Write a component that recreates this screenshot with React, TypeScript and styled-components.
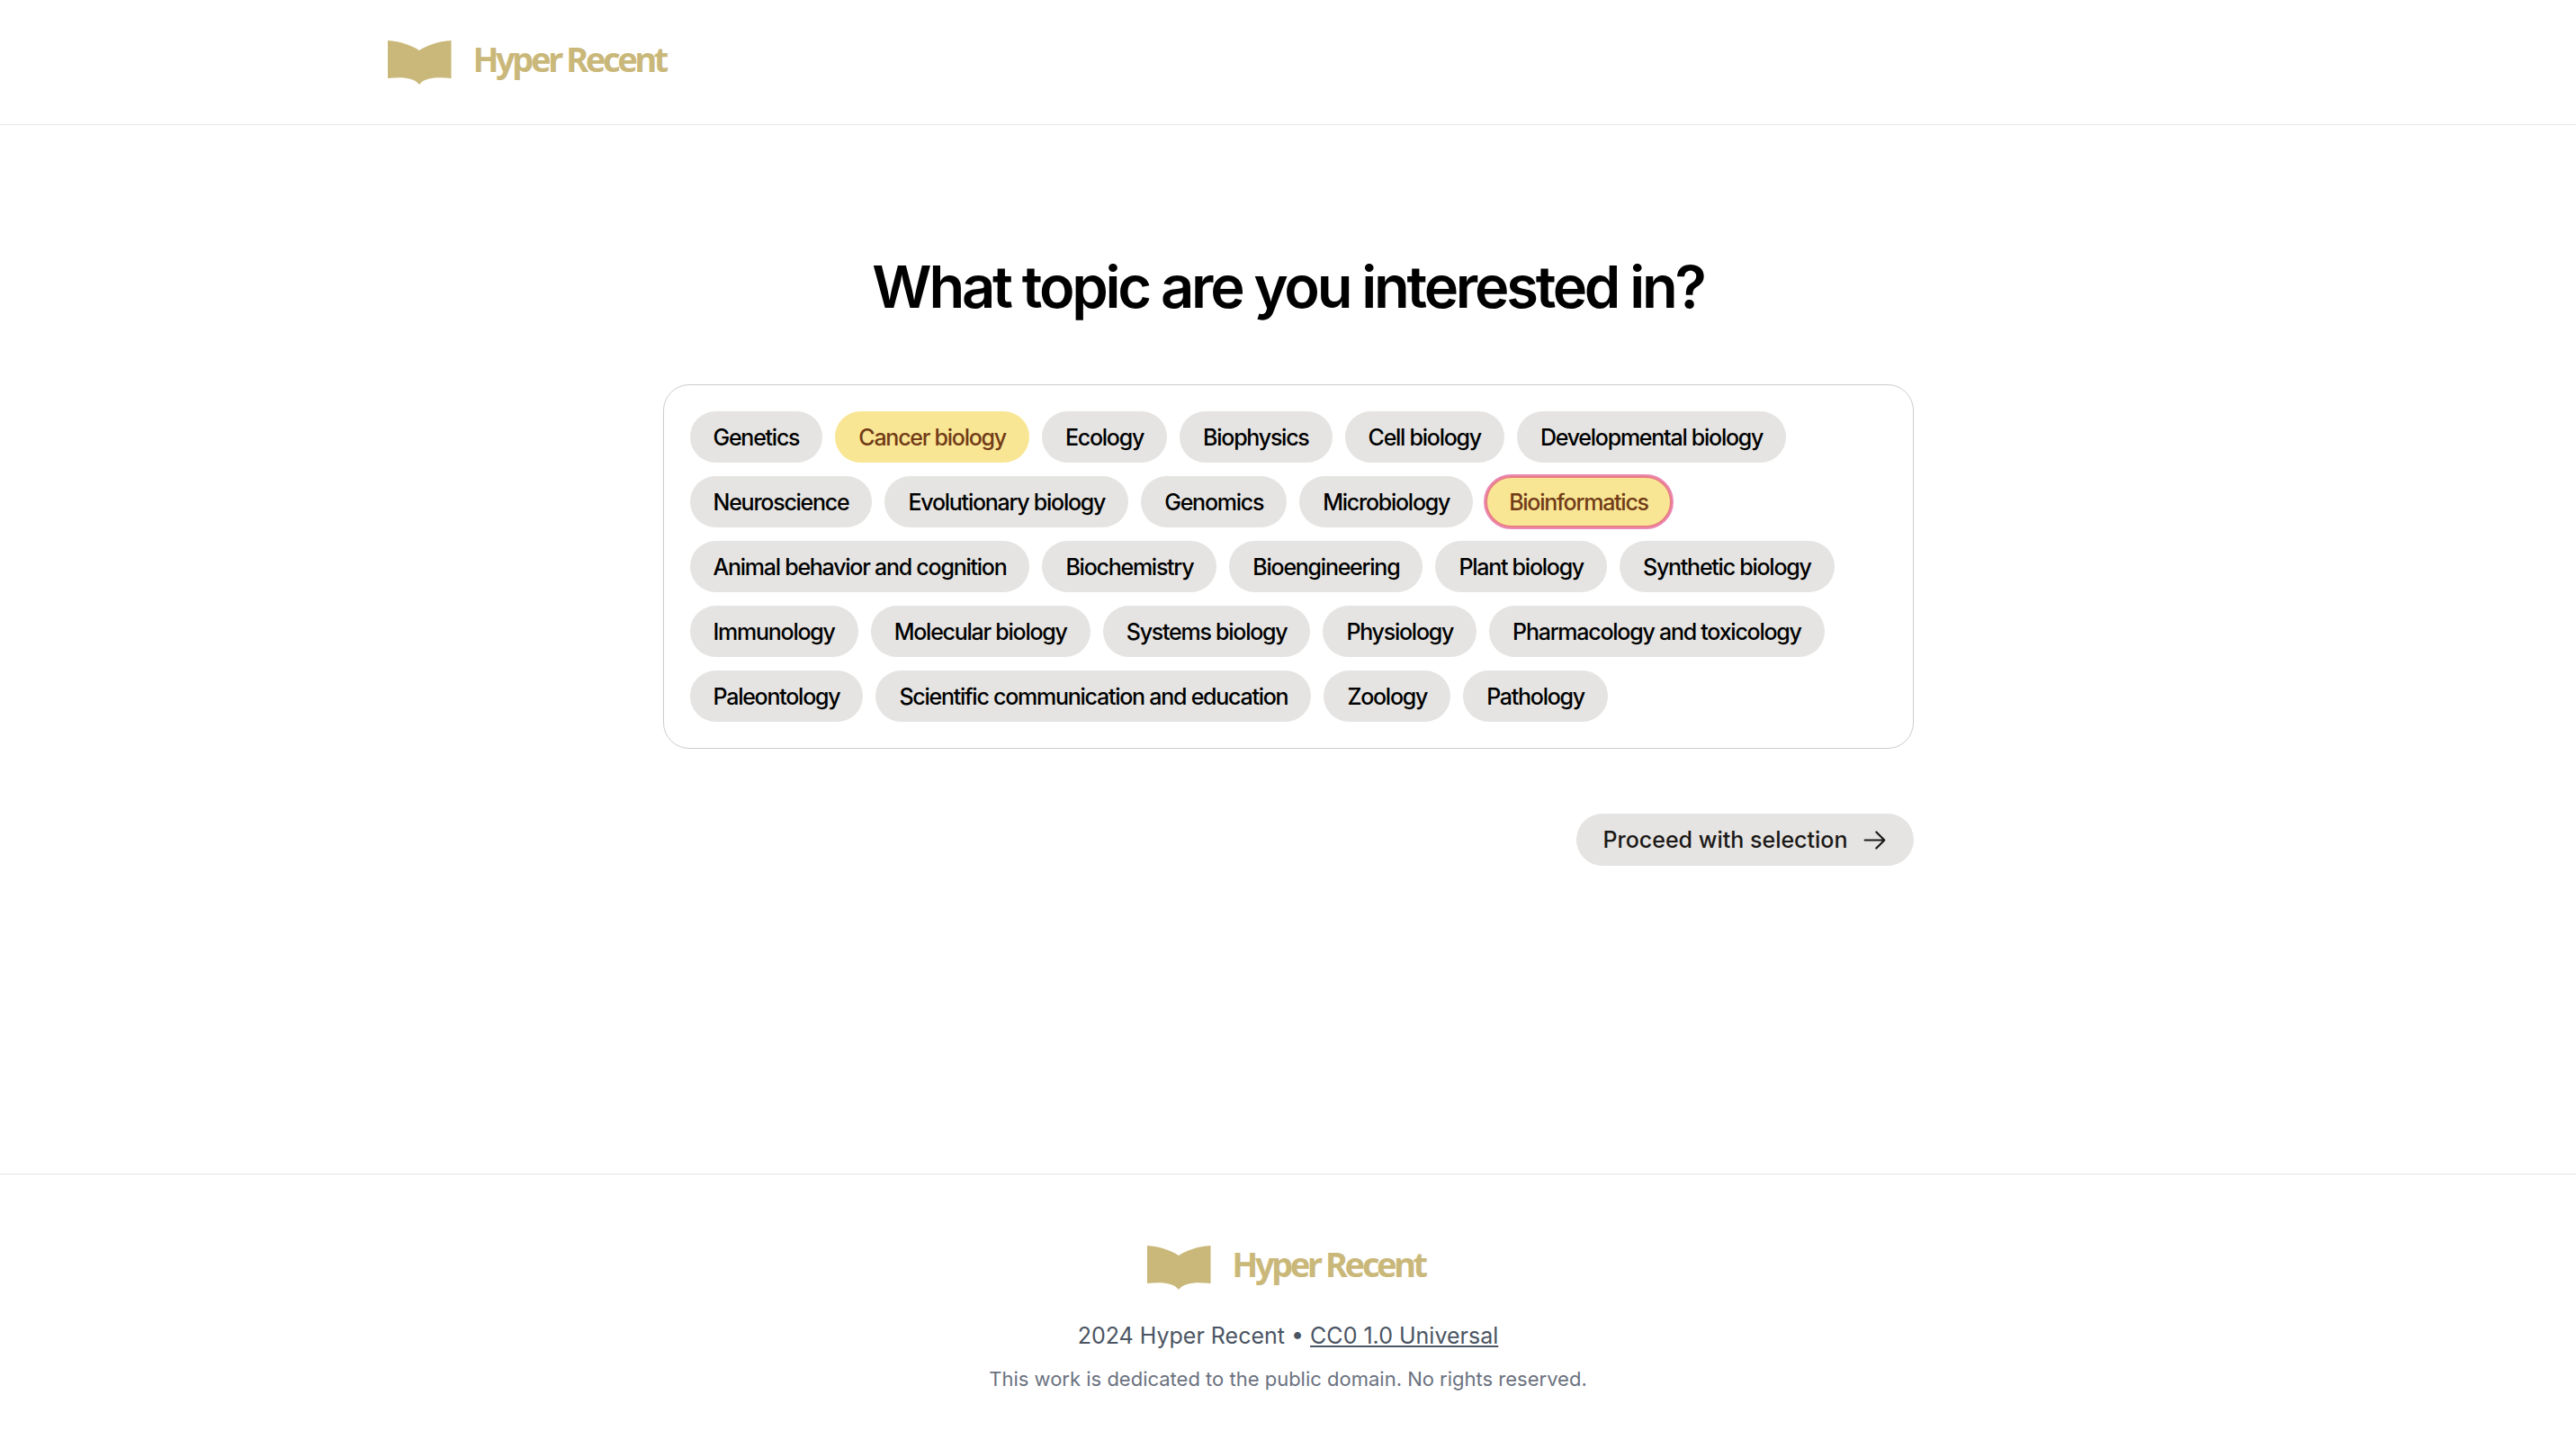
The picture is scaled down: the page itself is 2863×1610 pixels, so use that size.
import React, { useState } from "react";
import styled, { createGlobalStyle } from "styled-components";

const GlobalStyle = createGlobalStyle`
  *, *::before, *::after { box-sizing: border-box; }
  body {
    margin: 0;
    background: #fff;
    color: #000;
    font-family: Inter, "Liberation Sans", sans-serif;
  }
`;

const Page = styled.div`
  display: flex;
  flex-direction: column;
  min-height: 100vh;
`;

const Header = styled.header`
  display: flex;
  padding: 45px 15% 44px;
  border-bottom: 1px solid #e5e5e5;
`;

const LogoLink = styled.a`
  display: flex;
  align-items: flex-start;
  gap: 23px;
  padding-right: 6px;
  color: #cab87a;
  text-decoration: none;
`;

const LogoText = styled.span`
  font: 700 38px/40px "Noto Sans", "Open Sans", sans-serif;
  letter-spacing: -0.09em;
`;

const Main = styled.main`
  flex: 1;
  display: flex;
  flex-direction: column;
  width: 100%;
  max-width: 1390px;
  margin: 0 auto;
  padding-top: 144px;
`;

const Title = styled.h1`
  margin: 0 0 72px;
  font-size: 65px;
  line-height: 72px;
  font-weight: 600;
  letter-spacing: -0.05em;
  text-align: center;
`;

const TopicPanel = styled.div`
  display: flex;
  flex-wrap: wrap;
  gap: 15px 14px;
  padding: 29px;
  border: 1px solid #ccc;
  border-radius: 29px;
`;

const Chip = styled.button<{ $ring?: boolean }>`
  height: 57px;
  padding: 0 26px;
  border: 0;
  border-radius: 29px;
  background: #e5e4e2;
  color: #000;
  font: 500 25px/36px Inter, "Liberation Sans", sans-serif;
  letter-spacing: -0.05em;
  cursor: pointer;

  &[aria-pressed="true"] {
    background: #f9e694;
    color: #713b17;
  }

  ${(p) => p.$ring && "outline: 4px solid rgba(219, 39, 119, 0.55); outline-offset: -2px;"}
`;

const ProceedButton = styled.button`
  display: flex;
  align-items: center;
  align-self: flex-end;
  gap: 15px;
  height: 58px;
  margin-top: 72px;
  padding: 0 29px;
  border: 0;
  border-radius: 29px;
  background: #e5e4e2;
  color: #1c1917;
  font: 500 25px/36px Inter, "Liberation Sans", sans-serif;
  cursor: pointer;
`;

const Footer = styled.footer`
  display: flex;
  flex-direction: column;
  align-items: center;
  padding: 79px 0 60px;
  border-top: 1px solid #e5e5e5;
`;

const Copyright = styled.p`
  margin: 29px 0 0;
  color: #4b5563;
  font-size: 25px;
  line-height: 44px;
`;

const License = styled.a`
  color: inherit;
  text-decoration-thickness: 2px;
  text-underline-offset: 2px;
`;

const Notice = styled.p`
  margin: 8px 0 0;
  color: #6b7280;
  font-size: 22px;
  line-height: 36px;
`;

const Logo = () => (
  <LogoLink href="#">
    <svg width="73" height="49" viewBox="0 0 73 49" fill="currentColor" aria-hidden="true">
      <path d="M2 0C16 1 28 5 37 11C46 5 58 1 72.500 0V42C56 40.500 43 41 37 49C31 41 18 40.500 2 42Z" />
    </svg>
    <LogoText>Hyper Recent</LogoText>
  </LogoLink>
);

const topics = [
  "Genetics",
  "Cancer biology",
  "Ecology",
  "Biophysics",
  "Cell biology",
  "Developmental biology",
  "Neuroscience",
  "Evolutionary biology",
  "Genomics",
  "Microbiology",
  "Bioinformatics",
  "Animal behavior and cognition",
  "Biochemistry",
  "Bioengineering",
  "Plant biology",
  "Synthetic biology",
  "Immunology",
  "Molecular biology",
  "Systems biology",
  "Physiology",
  "Pharmacology and toxicology",
  "Paleontology",
  "Scientific communication and education",
  "Zoology",
  "Pathology",
];

export default function App() {
  const [selected, setSelected] = useState(["Cancer biology", "Bioinformatics"]);
  const [latest, setLatest] = useState("Bioinformatics");

  const toggle = (topic: string) => {
    setLatest(topic);
    setSelected((current) =>
      current.includes(topic) ? current.filter((t) => t !== topic) : [...current, topic]
    );
  };

  return (
    <Page>
      <GlobalStyle />
      <Header>
        <Logo />
      </Header>
      <Main>
        <Title>What topic are you interested in?</Title>
        <TopicPanel role="group" aria-label="Topics">
          {topics.map((topic) => (
            <Chip
              key={topic}
              type="button"
              aria-pressed={selected.includes(topic)}
              $ring={topic === latest}
              onClick={() => toggle(topic)}
            >
              {topic}
            </Chip>
          ))}
        </TopicPanel>
        <ProceedButton type="button">
          Proceed with selection
          <svg
            width="29"
            height="29"
            viewBox="0 0 24 24"
            fill="none"
            stroke="currentColor"
            strokeWidth="1.8"
            strokeLinecap="round"
            strokeLinejoin="round"
            aria-hidden="true"
          >
            <path d="M13.5 4.5 21 12m0 0-7.5 7.5M21 12H3" />
          </svg>
        </ProceedButton>
      </Main>
      <Footer>
        <Logo />
        <Copyright>
          2024 Hyper Recent • <License href="#">CC0 1.0 Universal</License>
        </Copyright>
        <Notice>This work is dedicated to the public domain. No rights reserved.</Notice>
      </Footer>
    </Page>
  );
}
